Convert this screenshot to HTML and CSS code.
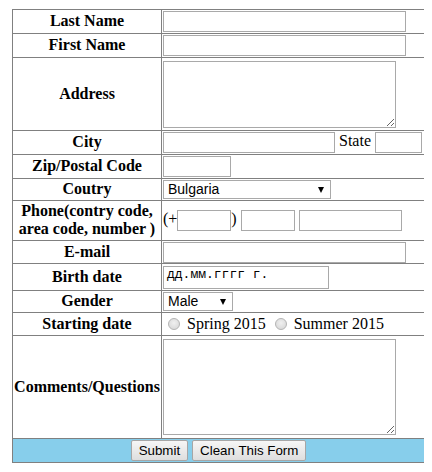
FILE: index.html
```html
<!DOCTYPE html>
<html>
<head>
<meta charset="utf-8">
<link rel="stylesheet" href="styles.css">
</head>
<body>
<form class="form">
<table class="tbl">
  <colgroup><col class="c1"><col class="c2"></colgroup>
  <tr class="h24"><th>Last Name</th><td><input class="txt w243" type="text"></td></tr>
  <tr class="h24"><th>First Name</th><td><input class="txt w243" type="text"></td></tr>
  <tr class="h73"><th>Address</th><td><textarea class="ta ta1"></textarea></td></tr>
  <tr class="h24"><th>City</th><td><input class="txt w172" type="text"> State <input class="txt w47" type="text"></td></tr>
  <tr class="h24"><th>Zip/Postal Code</th><td><input class="txt w68" type="text"></td></tr>
  <tr class="h22"><th>Coutry</th><td><span class="sel w168">Bulgaria<span class="arrow"></span></span></td></tr>
  <tr class="h40"><th>Phone(contry code, area code, number )</th><td>(+<input class="txt w54" type="text">) <input class="txt w54" type="text"> <input class="txt w103" type="text"></td></tr>
  <tr class="h23"><th>E-mail</th><td><input class="txt w243" type="text"></td></tr>
  <tr class="h27"><th>Birth date</th><td><span class="date">дд.мм.гггг г.</span></td></tr>
  <tr class="h22"><th>Gender</th><td><span class="sel w70">Male<span class="arrow"></span></span></td></tr>
  <tr class="h23"><th>Starting date</th><td><span class="radio"></span> Spring 2015 <span class="radio"></span> Summer 2015</td></tr>
  <tr class="h103"><th>Comments/Questions</th><td><textarea class="ta ta2"></textarea></td></tr>
  <tr class="h24 btnrow"><td colspan="2"><button type="button" class="btn">Submit</button> <button type="button" class="btn">Clean This Form</button></td></tr>
</table>
</form>
</body>
</html>
```

FILE: styles.css
```css
body {
  margin: 8px;
  font-family: "Liberation Serif", "Times New Roman", serif;
  font-size: 16px;
  color: #000;
  background: #fff;
}
.tbl {
  margin: 1px 0 0 4px;
  width: 413px;
  border-collapse: collapse;
  border: 1px solid #222;
  table-layout: fixed;
}
.c1 { width: 149px; }
.tbl th, .tbl td {
  border: 1px solid #808080;
  padding: 0 1px;
  vertical-align: middle;
  line-height: 18px;
  box-sizing: border-box;
}
.tbl th {
  font-weight: bold;
  text-align: center;
  padding-bottom: 1px;
}
.tbl td {
  text-align: left;
  white-space: nowrap;
}
.h22 > * { height: 22px; }
.h23 > * { height: 23px; }
.h24 > * { height: 24px; }
.h27 > * { height: 27px; }
.h40 > * { height: 40px; }
.h73 > * { height: 73px; }
.h103 > * { height: 103px; }
.txt {
  box-sizing: border-box;
  height: 21px;
  border: 1px solid #a9a9a9;
  padding: 1px 2px;
  margin: 0;
  font: 13.33px Arial, "Liberation Sans", sans-serif;
  vertical-align: middle;
  background: #fff;
}
.w243 { width: 243px; }
.w172 { width: 172px; }
.w47 { width: 47px; }
.w68 { width: 68px; }
.w54 { width: 54px; }
.w103 { width: 103px; }
.ta {
  display: block;
  box-sizing: border-box;
  width: 233px;
  border: 1px solid #a9a9a9;
  margin: 1px 0;
  padding: 2px;
  font: 13.33px "Liberation Mono", monospace;
}
.ta1 { height: 67px; }
.ta2 { height: 96px; }
.sel {
  position: relative;
  display: inline-block;
  box-sizing: border-box;
  height: 19px;
  line-height: 17px;
  border: 1px solid #a9a9a9;
  padding: 0 0 0 4px;
  font: 14px Arial, "Liberation Sans", sans-serif;
  vertical-align: middle;
  background: #fff;
}
.w168 { width: 168px; }
.w70 { width: 70px; }
.arrow {
  position: absolute;
  right: 6px;
  top: 6px;
  width: 0;
  height: 0;
  border-left: 3.5px solid transparent;
  border-right: 3.5px solid transparent;
  border-top: 6px solid #000;
}
.date {
  display: inline-block;
  box-sizing: border-box;
  width: 166px;
  height: 23px;
  line-height: 21px;
  border: 1px solid #a9a9a9;
  padding: 0 3px;
  font: 13px "Liberation Mono", monospace;
  vertical-align: middle;
}
.radio {
  display: inline-block;
  box-sizing: border-box;
  width: 12px;
  height: 12px;
  margin: 0 3px 0 5px;
  border: 1px solid #b5b5b5;
  border-radius: 50%;
  background: radial-gradient(circle at 50% 40%, #f0f0f0 0%, #dcdcdc 70%, #cfcfcf 100%);
  vertical-align: -1px;
}
.btnrow > td {
  background: #87ceeb;
  text-align: center;
  border-top: 1px solid #808080;
}
.btn {
  box-sizing: border-box;
  height: 21px;
  margin: 0;
  padding: 0 7px;
  border: 1px solid #a6a6a6;
  border-radius: 2px;
  background: linear-gradient(#f6f6f6, #dedede);
  font: 13.33px Arial, "Liberation Sans", sans-serif;
  color: #000;
  vertical-align: middle;
}
```
